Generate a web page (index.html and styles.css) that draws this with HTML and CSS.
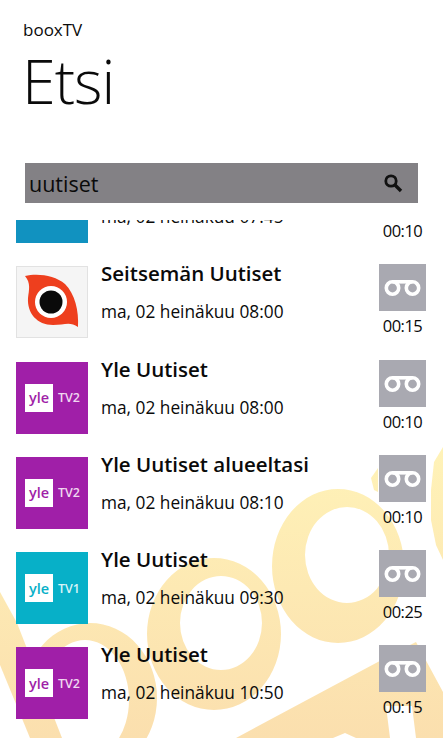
FILE: index.html
```html
<!DOCTYPE html>
<html lang="fi">
  <head>
    <meta charset="UTF-8" />
    <title>booxTV</title>
    <link rel="stylesheet" href="styles.css">
  </head>
  <body>
    <svg class="watermark" viewBox="0 0 443 738" aria-hidden="true">
      <defs>
        <linearGradient id="mark" gradientUnits="userSpaceOnUse" x1="0" y1="440" x2="0" y2="738">
          <stop offset="0" stop-color="#fff3b8" />
          <stop offset="1" stop-color="#fbdfae" />
        </linearGradient>
      </defs>
      <g fill="url(#mark)" fill-rule="evenodd">
        <!-- rings -->
        <path d="M147 634 a67 76 0 1 0 134 0 a67 76 0 1 0 -134 0 Z M180 623 a41 47 0 1 0 82 0 a41 47 0 1 0 -82 0 Z" />
        <path d="M272 566 a66 77 0 1 0 132 0 a66 77 0 1 0 -132 0 Z M305 555 a42 48 0 1 0 84 0 a42 48 0 1 0 -84 0 Z" />
        <path d="M23 698 a67 75 0 1 0 134 0 a67 75 0 1 0 -134 0 Z M41 700 a44 60 0 1 0 88 0 a44 60 0 1 0 -88 0 Z" />
        <!-- legs and corners -->
        <polygon points="0,592 17,623 62,738 30,738 0,665" />
        <polygon points="236,738 376,663 400,650 416,642 443,692 443,738 416,738 412,706 386,706 390,738 356,738 345,733 333,738" />
        <polygon points="443,447 434,462 431,490 431,520 436,545 443,560" />
        <polygon points="378,468 371,478 374,490 378,492" />
      </g>
    </svg>

    <div class="page">
      <header class="header">
        <div class="app-name">booxTV</div>
        <h1 class="page-title">Etsi</h1>
      </header>

      <div class="search-box">
        <span class="search-text">uutiset</span>
        <svg class="search-icon" viewBox="0 0 20 20">
          <circle cx="8" cy="8" r="5.2" fill="none" stroke="#111" stroke-width="2.8" />
          <line x1="12" y1="12" x2="18" y2="18" stroke="#111" stroke-width="3.4" />
        </svg>
      </div>

      <div class="results">
        <div class="results-inner">
          <div class="row">
            <div class="thumb thumb-blue"><span class="notch"></span></div>
            <div class="info">
              <div class="title"></div>
              <div class="time">ma, 02 heinäkuu 07:45</div>
            </div>
            <div class="rec">
              <svg class="rec-btn" viewBox="0 0 47 47"><use href="#tape" /></svg>
              <div class="duration">00:10</div>
            </div>
          </div>

          <div class="row">
            <div class="thumb thumb-seven">
              <svg viewBox="0 0 70 70">
                <path d="M8 9 C20 6 38 8 48 17 C58 27 62 44 61 60 C53 54 47 58 36 58 C20 58 10 46 11 31 C12 23 14 16 8 9 Z" fill="#ee3f1e" />
                <circle cx="34" cy="35" r="16" fill="#fff" />
                <circle cx="34" cy="35" r="11.5" fill="#0a0a0a" />
              </svg>
            </div>
            <div class="info">
              <div class="title">Seitsemän Uutiset</div>
              <div class="time">ma, 02 heinäkuu 08:00</div>
            </div>
            <div class="rec">
              <svg class="rec-btn" viewBox="0 0 47 47"><use href="#tape" /></svg>
              <div class="duration">00:15</div>
            </div>
          </div>

          <div class="row">
            <div class="thumb thumb-purple">
              <span class="yle-box">yle</span><span class="yle-channel">TV2</span>
            </div>
            <div class="info">
              <div class="title">Yle Uutiset</div>
              <div class="time">ma, 02 heinäkuu 08:00</div>
            </div>
            <div class="rec">
              <svg class="rec-btn" viewBox="0 0 47 47"><use href="#tape" /></svg>
              <div class="duration">00:10</div>
            </div>
          </div>

          <div class="row">
            <div class="thumb thumb-purple">
              <span class="yle-box">yle</span><span class="yle-channel">TV2</span>
            </div>
            <div class="info">
              <div class="title">Yle Uutiset alueeltasi</div>
              <div class="time">ma, 02 heinäkuu 08:10</div>
            </div>
            <div class="rec">
              <svg class="rec-btn" viewBox="0 0 47 47"><use href="#tape" /></svg>
              <div class="duration">00:10</div>
            </div>
          </div>

          <div class="row">
            <div class="thumb thumb-teal">
              <span class="yle-box">yle</span><span class="yle-channel">TV1</span>
            </div>
            <div class="info">
              <div class="title">Yle Uutiset</div>
              <div class="time">ma, 02 heinäkuu 09:30</div>
            </div>
            <div class="rec">
              <svg class="rec-btn" viewBox="0 0 47 47"><use href="#tape" /></svg>
              <div class="duration">00:25</div>
            </div>
          </div>

          <div class="row">
            <div class="thumb thumb-purple">
              <span class="yle-box">yle</span><span class="yle-channel">TV2</span>
            </div>
            <div class="info">
              <div class="title">Yle Uutiset</div>
              <div class="time">ma, 02 heinäkuu 10:50</div>
            </div>
            <div class="rec">
              <svg class="rec-btn" viewBox="0 0 47 47"><use href="#tape" /></svg>
              <div class="duration">00:15</div>
            </div>
          </div>
        </div>
      </div>
    </div>

    <svg class="defs" width="0" height="0" aria-hidden="true">
      <defs>
        <g id="tape">
          <rect width="47" height="47" fill="#a9a9b1" />
          <circle cx="13.5" cy="24" r="6.2" fill="none" stroke="#fff" stroke-width="3.6" />
          <circle cx="33.5" cy="24" r="6.2" fill="none" stroke="#fff" stroke-width="3.6" />
          <rect x="13.5" y="16" width="20" height="3.6" fill="#fff" />
        </g>
      </defs>
    </svg>
  </body>
</html>
```

FILE: styles.css
```css
html,
body {
  margin: 0;
  height: 100%;
}
body {
  position: relative;
  width: 443px;
  height: 738px;
  overflow: hidden;
  background-color: #fff;
  color: #0a0a0a;
  font-family: "Open Sans", "Noto Sans", sans-serif;
}
.watermark {
  position: absolute;
  left: 0;
  top: 0;
  width: 443px;
  height: 738px;
}
.defs {
  position: absolute;
}
.page {
  position: relative;
  display: flex;
  flex-direction: column;
  height: 100%;
}
.header {
  padding: 19px 0 0 23px;
}
.app-name {
  font-size: 17px;
  line-height: 22px;
}
.page-title {
  margin: 0 0 0 -1px;
  font-size: 61px;
  font-weight: 300;
  line-height: 80px;
  letter-spacing: -1px;
}
.search-box {
  display: flex;
  align-items: center;
  justify-content: space-between;
  box-sizing: border-box;
  height: 40px;
  margin: 42px 25px 0 25px;
  padding: 0 15px 0 4px;
  background-color: #838185;
}
.search-text {
  font-size: 21.5px;
}
.search-icon {
  width: 20px;
  height: 20px;
}
.results {
  flex: 1;
  margin-top: 17px;
  overflow: hidden;
}
.results-inner {
  display: flex;
  flex-direction: column;
  gap: 23.25px;
  margin-top: -49px;
  padding: 0 16px;
}
.row {
  display: flex;
  height: 72px;
}
.thumb {
  position: relative;
  display: flex;
  align-items: center;
  flex: none;
  width: 72px;
  height: 72px;
}
.thumb svg {
  display: block;
  width: 70px;
  height: 70px;
}
.thumb-blue {
  background-color: #1192c0;
}
.notch {
  position: absolute;
  left: 39px;
  top: 0;
  width: 9px;
  height: 8px;
  background-color: #fff;
}
.thumb-seven {
  box-sizing: border-box;
  background-color: #f5f5f5;
  border: 1px solid #e2e2e2;
}
.thumb-purple {
  background-color: #a01fa8;
  color: #a01fa8;
}
.thumb-teal {
  background-color: #07b0c8;
  color: #07b0c8;
}
.yle-box {
  display: flex;
  align-items: center;
  justify-content: center;
  width: 28px;
  height: 28px;
  margin: 0 0 0 9px;
  background-color: #fff;
  font-size: 14.5px;
  font-weight: 600;
}
.yle-channel {
  margin-left: 5px;
  color: #f0d8f0;
  font-size: 12.5px;
  font-weight: 600;
}
.thumb-teal .yle-channel {
  color: #d8f4f8;
}
.info {
  flex: 1;
  margin-left: 13px;
  margin-top: -7px;
}
.title {
  min-height: 28px;
  font-size: 20.5px;
  font-weight: 600;
  line-height: 28px;
}
.time {
  margin-top: 13px;
  font-size: 17.3px;
  line-height: 24px;
}
.rec {
  flex: none;
  width: 47px;
  margin-top: -2px;
  margin-right: 1px;
  text-align: center;
}
.rec-btn {
  display: block;
  width: 47px;
  height: 47px;
}
.duration {
  margin-top: 4px;
  font-size: 16.5px;
  letter-spacing: -0.5px;
  line-height: 22px;
}
```
